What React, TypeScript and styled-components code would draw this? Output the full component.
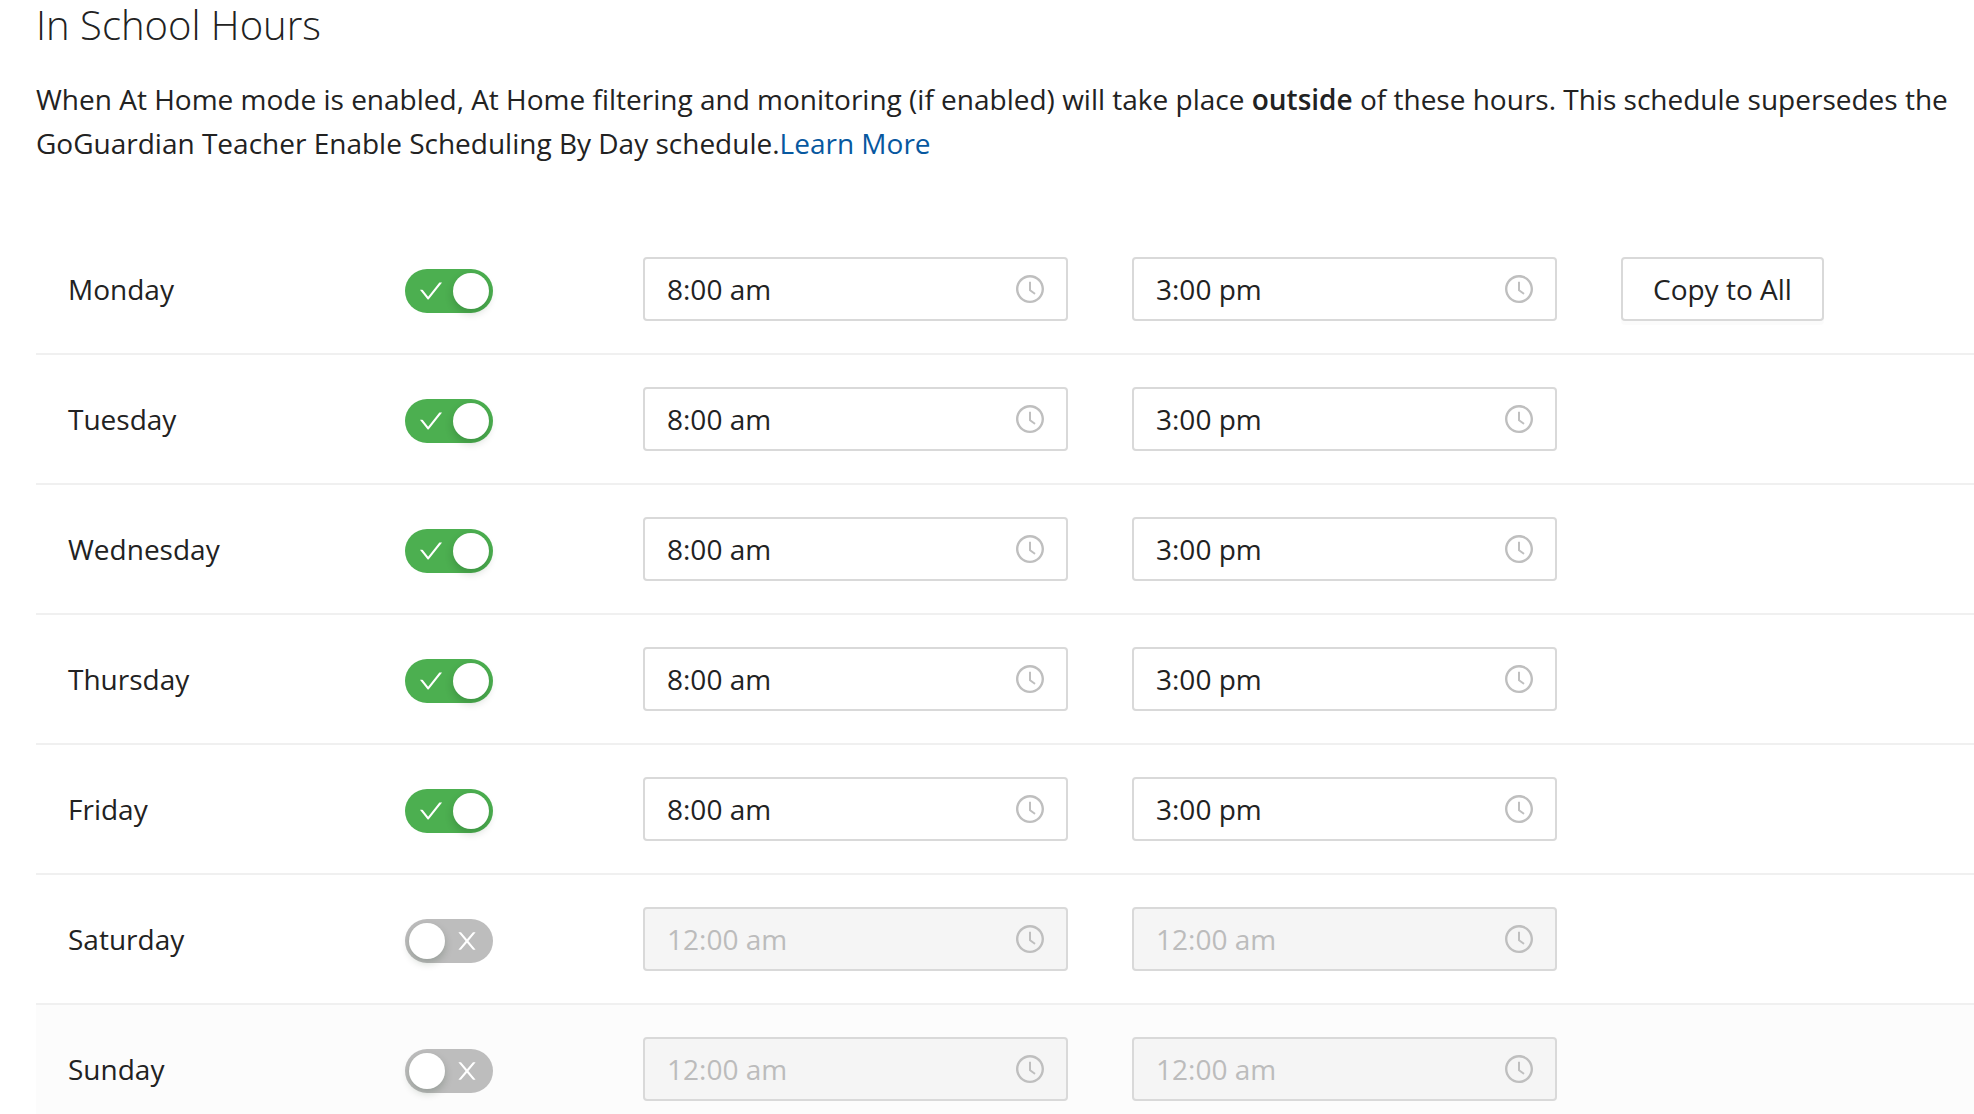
import React, { useState } from "react";
import styled, { createGlobalStyle } from "styled-components";

const GlobalStyle = createGlobalStyle`
  *, *::before, *::after {
    box-sizing: border-box;
  }
  body {
    margin: 0;
    background: #ffffff;
    color: #222222;
    font-family: "Open Sans", "Noto Sans", sans-serif;
    font-size: 28px;
    line-height: 44px;
  }
`;

const Page = styled.main`
  padding-left: 36px;
  height: 100vh;
  overflow: hidden;
`;

const Title = styled.h1`
  margin: 0 0 27px;
  font-size: 40px;
  font-weight: 300;
  line-height: 50px;
`;

const Description = styled.p`
  margin: 0 0 60px;
`;

const Strong = styled.strong`
  font-weight: 600;
`;

const LearnMore = styled.a`
  color: #07589f;
  text-decoration: none;
`;

const Schedule = styled.table`
  width: 100%;
  table-layout: fixed;
  border-collapse: separate;
  border-spacing: 0;
`;

const Column = styled.col<{ $width?: number }>`
  width: ${({ $width }) => ($width ? `${$width}px` : "auto")};
`;

const Row = styled.tr<{ $highlighted: boolean }>`
  background: ${({ $highlighted }) => ($highlighted ? "#fcfcfc" : "transparent")};
`;

const DayCell = styled.th`
  padding: 32px;
  border-bottom: 2px solid #f0f0f0;
  font-weight: 400;
  text-align: left;
  vertical-align: middle;
`;

const Cell = styled.td`
  padding: 32px;
  border-bottom: 2px solid #f0f0f0;
  vertical-align: middle;
`;

const ToggleCell = styled(Cell)`
  padding: 36px 32px 32px;
`;

const Track = styled.label<{ $on: boolean }>`
  position: relative;
  display: flex;
  flex-direction: ${({ $on }) => ($on ? "row" : "row-reverse")};
  align-items: center;
  justify-content: space-between;
  width: 88px;
  height: 44px;
  padding: ${({ $on }) => ($on ? "4px 4px 4px 14px" : "4px 14px 4px 4px")};
  border-radius: 22px;
  background: ${({ $on }) => ($on ? "#4caf50" : "#bdbdbd")};
  cursor: pointer;
`;

const HiddenCheckbox = styled.input`
  position: absolute;
  inset: 0;
  width: 100%;
  height: 100%;
  margin: 0;
  opacity: 0;
  cursor: pointer;
`;

const Knob = styled.span`
  width: 36px;
  height: 36px;
  border-radius: 50%;
  background: #ffffff;
  box-shadow: 0 4px 8px rgba(0, 35, 11, 0.2);
`;

const Field = styled.div<{ $disabled: boolean }>`
  display: flex;
  align-items: center;
  height: 64px;
  padding: 0 22px;
  border: 2px solid #d9d9d9;
  border-radius: 4px;
  background: ${({ $disabled }) => ($disabled ? "#f5f5f5" : "#ffffff")};
`;

const TimeInput = styled.input`
  flex: 1;
  min-width: 0;
  height: 44px;
  padding: 0;
  border: 0;
  outline: 0;
  background: transparent;
  color: #222222;
  font: inherit;

  &:disabled {
    color: #bcbcbc;
  }
`;

const CopyButton = styled.button`
  height: 64px;
  padding: 0 30px;
  display: block;
  border: 2px solid #d9d9d9;
  border-radius: 4px;
  background: #ffffff;
  box-shadow: 0 4px 0 rgba(0, 0, 0, 0.016);
  color: #222222;
  font: inherit;
  white-space: nowrap;
  cursor: pointer;
`;

const ClockIcon = () => (
  <svg width="28" height="28" viewBox="64 64 896 896" fill="#bfbfbf" aria-hidden="true">
    <path d="M512 64C264.6 64 64 264.6 64 512s200.6 448 448 448 448-200.6 448-448S759.4 64 512 64zm0 820c-205.4 0-372-166.6-372-372s166.6-372 372-372 372 166.6 372 372-166.6 372-372 372z" />
    <path d="M686.7 638.6L544.1 535.5V288c0-4.4-3.6-8-8-8H488c-4.4 0-8 3.6-8 8v275.4c0 2.6 1.2 5 3.3 6.5l165.4 120.6c3.6 2.6 8.6 1.8 11.2-1.7l28.6-39c2.6-3.7 1.8-8.7-1.8-11.2z" />
  </svg>
);

const CheckIcon = () => (
  <svg width="24" height="24" viewBox="64 64 896 896" fill="#ffffff" aria-hidden="true">
    <path d="M912 190h-69.9c-9.8 0-19.1 4.5-25.1 12.2L404.7 724.5 207 474a32 32 0 00-25.1-12.2H112c-6.7 0-10.4 7.7-6.3 12.9l273.9 347c12.8 16.2 37.4 16.2 50.3 0l488.4-618.9c4.1-5.1.4-12.8-6.3-12.8z" />
  </svg>
);

const CloseIcon = () => (
  <svg width="24" height="24" viewBox="64 64 896 896" fill="#ffffff" aria-hidden="true">
    <path d="M563.8 512l262.5-312.9c4.4-5.2.7-13.1-6.1-13.1h-79.8c-4.7 0-9.2 2.1-12.3 5.7L511.6 449.8 295.1 191.7c-3-3.6-7.5-5.7-12.3-5.7H203c-6.8 0-10.5 7.9-6.1 13.1L459.4 512 196.9 824.9A7.95 7.95 0 00203 838h79.8c4.7 0 9.2-2.1 12.3-5.7l216.5-258.1 216.5 258.1c3 3.6 7.5 5.7 12.3 5.7h79.8c6.8 0 10.5-7.9 6.1-13.1L563.8 512z" />
  </svg>
);

interface DaySchedule {
  day: string;
  enabled: boolean;
  start: string;
  end: string;
}

const weekday = (day: string): DaySchedule => ({
  day,
  enabled: true,
  start: "8:00 am",
  end: "3:00 pm",
});

const weekend = (day: string): DaySchedule => ({
  day,
  enabled: false,
  start: "12:00 am",
  end: "12:00 am",
});

const initialSchedule: DaySchedule[] = [
  weekday("Monday"),
  weekday("Tuesday"),
  weekday("Wednesday"),
  weekday("Thursday"),
  weekday("Friday"),
  weekend("Saturday"),
  weekend("Sunday"),
];

interface TimeFieldProps {
  label: string;
  value: string;
  disabled: boolean;
  onChange: (value: string) => void;
}

const TimeField = ({ label, value, disabled, onChange }: TimeFieldProps) => (
  <Field $disabled={disabled}>
    <TimeInput
      type="text"
      aria-label={label}
      value={value}
      disabled={disabled}
      onChange={(event) => onChange(event.target.value)}
    />
    <ClockIcon />
  </Field>
);

export default function App() {
  const [schedule, setSchedule] = useState(initialSchedule);

  const update = (day: string, change: Partial<DaySchedule>) =>
    setSchedule((rows) => rows.map((row) => (row.day === day ? { ...row, ...change } : row)));

  const copyToAll = () =>
    setSchedule((rows) =>
      rows.map((row) => (row.enabled ? { ...row, start: rows[0].start, end: rows[0].end } : row)),
    );

  return (
    <>
      <GlobalStyle />
      <Page>
        <Title>In School Hours</Title>
        <Description>
          When At Home mode is enabled, At Home filtering and monitoring (if enabled) will take
          place <Strong>outside</Strong> of these hours. This schedule supersedes the GoGuardian
          Teacher Enable Scheduling By Day schedule.
          <LearnMore href="#learn-more">Learn More</LearnMore>
        </Description>
        <Schedule>
          <colgroup>
            <Column $width={337} />
            <Column $width={238} />
            <Column $width={489} />
            <Column $width={489} />
            <Column />
          </colgroup>
          <tbody>
            {schedule.map(({ day, enabled, start, end }, index) => (
              <Row key={day} $highlighted={day === "Sunday"}>
                <DayCell scope="row">
                  <label htmlFor={`enable-${day}`}>{day}</label>
                </DayCell>
                <ToggleCell>
                  <Track $on={enabled}>
                    <HiddenCheckbox
                      type="checkbox"
                      id={`enable-${day}`}
                      checked={enabled}
                      onChange={(event) => update(day, { enabled: event.target.checked })}
                    />
                    {enabled ? <CheckIcon /> : <CloseIcon />}
                    <Knob />
                  </Track>
                </ToggleCell>
                <Cell>
                  <TimeField
                    label={`${day} start time`}
                    value={start}
                    disabled={!enabled}
                    onChange={(value) => update(day, { start: value })}
                  />
                </Cell>
                <Cell>
                  <TimeField
                    label={`${day} end time`}
                    value={end}
                    disabled={!enabled}
                    onChange={(value) => update(day, { end: value })}
                  />
                </Cell>
                <Cell>
                  {index === 0 && (
                    <CopyButton type="button" onClick={copyToAll}>
                      Copy to All
                    </CopyButton>
                  )}
                </Cell>
              </Row>
            ))}
          </tbody>
        </Schedule>
      </Page>
    </>
  );
}
